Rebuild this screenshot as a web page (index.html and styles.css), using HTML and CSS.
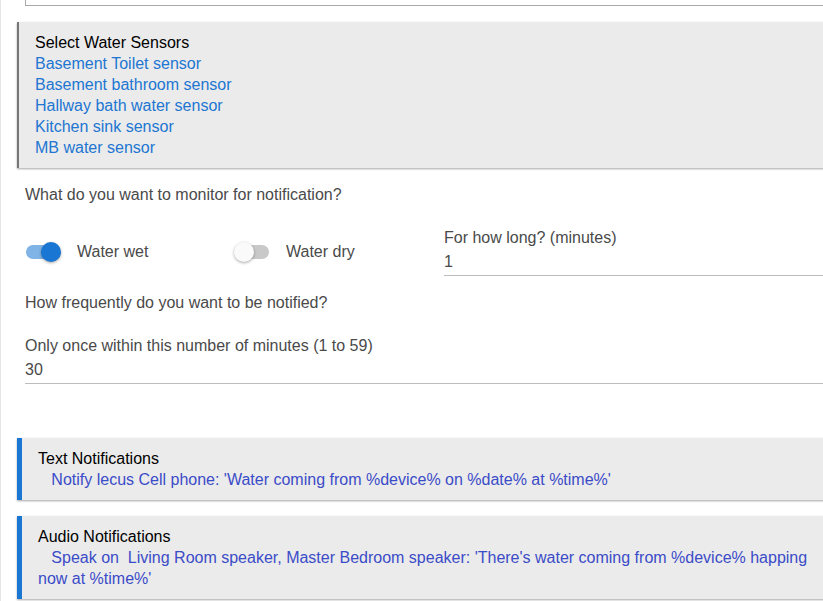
FILE: index.html
```html
<!DOCTYPE html>
<html lang="en">
<head>
    <meta charset="UTF-8">
    <meta name="viewport" content="width=device-width, initial-scale=1.0">
    <title>Water Sensor Notifications</title>
    <link rel="stylesheet" href="styles.css">
</head>
<body>
    <div class="page">
        <div class="prev-box"></div>

        <div class="panel sensors">
            <div class="panel-title">Select Water Sensors</div>
            <div class="sensor">Basement Toilet sensor</div>
            <div class="sensor">Basement bathroom sensor</div>
            <div class="sensor">Hallway bath water sensor</div>
            <div class="sensor">Kitchen sink sensor</div>
            <div class="sensor">MB water sensor</div>
        </div>

        <div class="section">
            <p class="question">What do you want to monitor for notification?</p>
            <div class="monitor-row">
                <div class="toggle">
                    <span class="switch on"><span class="track"></span><span class="thumb"></span></span>
                    <span class="toggle-label">Water wet</span>
                </div>
                <div class="toggle">
                    <span class="switch"><span class="track"></span><span class="thumb"></span></span>
                    <span class="toggle-label">Water dry</span>
                </div>
                <div class="field">
                    <div class="field-label">For how long? (minutes)</div>
                    <div class="field-value">1</div>
                </div>
            </div>
            <p class="question freq">How frequently do you want to be notified?</p>
            <div class="field wide">
                <div class="field-label">Only once within this number of minutes (1 to 59)</div>
                <div class="field-value">30</div>
            </div>
        </div>

        <div class="panel notify">
            <div class="panel-title">Text Notifications</div>
            <div class="notify-text">&nbsp;&nbsp;&nbsp;Notify lecus Cell phone: 'Water coming from %device% on %date% at %time%'</div>
        </div>

        <div class="panel notify">
            <div class="panel-title">Audio Notifications</div>
            <div class="notify-text">&nbsp;&nbsp;&nbsp;Speak on&nbsp; Living Room speaker, Master Bedroom speaker: 'There's water coming from %device% happing now at %time%'</div>
        </div>
    </div>
</body>
</html>
```

FILE: styles.css
```css
html, body {
    margin: 0;
    padding: 0;
    overflow: hidden;
}
body {
    font-family: "Liberation Sans", Arial, sans-serif;
    font-size: 16px;
    line-height: 21px;
    color: #4a4a4a;
    background-color: #ffffff;
}
.page {
    border-left: 1px solid #e6e6e6;
    padding-left: 16px;
    min-height: 601px;
}
.prev-box {
    height: 5px;
    margin-left: 8px;
    margin-right: -20px;
    border: 1px solid #a8a8a8;
    border-top: none;
}
.panel {
    background-color: #ebebeb;
    box-shadow: 0 1px 2px rgba(0, 0, 0, 0.35);
    margin-right: -20px;
}
.panel-title {
    color: #000000;
}
.sensors {
    margin-top: 16px;
    border-left: 2px solid #777777;
    padding: 10px 16px 10px 16px;
}
.sensor {
    color: #2176d2;
}
.section {
    padding-left: 8px;
}
.question {
    margin: 16px 0 0 0;
}
.monitor-row {
    display: grid;
    grid-template-columns: 209px 210px 1fr;
    align-items: center;
    margin-top: 22px;
}
.toggle {
    display: flex;
    align-items: center;
    gap: 16px;
}
.switch {
    position: relative;
    width: 36px;
    height: 20px;
}
.track {
    position: absolute;
    left: 1px;
    top: 3px;
    width: 34px;
    height: 14px;
    border-radius: 7px;
    background-color: #c9c9c9;
}
.thumb {
    position: absolute;
    left: 0;
    top: 0;
    width: 20px;
    height: 20px;
    border-radius: 50%;
    background-color: #fafafa;
    box-shadow: 0 1px 3px rgba(0, 0, 0, 0.35);
}
.switch.on .track {
    background-color: #80b3e6;
}
.switch.on .thumb {
    left: 16px;
    background-color: #1976d2;
}
.field {
    border-bottom: 1px solid #bdbdbd;
    padding-bottom: 3px;
}
.field-value {
    margin-top: 3px;
}
.question.freq {
    margin-top: 16px;
}
.field.wide {
    margin-top: 22px;
    margin-right: -20px;
}
.notify {
    border-left: 5px solid #1976d2;
    padding: 10px 16px 10px 16px;
    margin-top: 16px;
}
.section + .notify {
    margin-top: 54px;
}
.notify-text {
    color: #3b4cc8;
}
```
